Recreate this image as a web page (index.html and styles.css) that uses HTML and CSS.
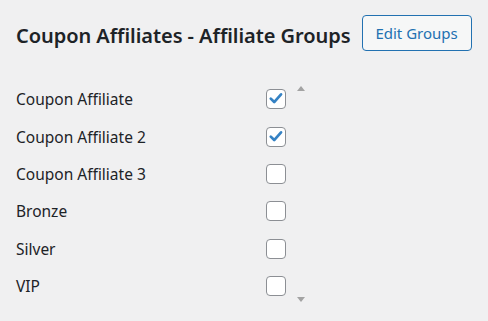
FILE: index.html
```html
<!DOCTYPE html>
<html lang="en">
<head>
  <meta charset="UTF-8">
  <title>Coupon Affiliates - Affiliate Groups</title>
  <link rel="stylesheet" href="styles.css">
</head>
<body>
  <div class="header">
    <h1>Coupon Affiliates - Affiliate Groups</h1>
    <a class="button" href="#">Edit Groups</a>
  </div>

  <div class="groups">
    <div class="list">
      <label class="row"><span class="name">Coupon Affiliate</span><input type="checkbox" checked></label>
      <label class="row"><span class="name">Coupon Affiliate 2</span><input type="checkbox" checked></label>
      <label class="row"><span class="name">Coupon Affiliate 3</span><input type="checkbox"></label>
      <label class="row"><span class="name">Bronze</span><input type="checkbox"></label>
      <label class="row"><span class="name">Silver</span><input type="checkbox"></label>
      <label class="row"><span class="name">VIP</span><input type="checkbox"></label>
    </div>
    <div class="scrollbar">
      <span class="arrow up"></span>
      <span class="arrow down"></span>
    </div>
  </div>
</body>
</html>
```

FILE: styles.css
```css
body {
  margin: 0;
  background: #f0f0f1;
  color: #1d2327;
  font-family: "Noto Sans", "Open Sans", sans-serif;
}

.header {
  display: flex;
  align-items: center;
  padding: 15px 0 0 16px;
  height: 36px;
}

h1 {
  margin: 5px 0 0 0;
  font-size: 20px;
  font-weight: 600;
  letter-spacing: -0.05px;
}

.button {
  margin-left: 11px;
  height: 34px;
  width: 108px;
  display: flex;
  align-items: center;
  justify-content: center;
  border: 1px solid #2271b1;
  border-radius: 4px;
  background: #f6f7f7;
  color: #2271b1;
  font-size: 15px;
  text-decoration: none;
}

.groups {
  display: flex;
  margin-top: 29.5px;
  padding-left: 16px;
  height: 225px;
}

.list {
  width: 276px;
}

.row {
  display: flex;
  align-items: center;
  height: 37.4px;
  font-size: 15.5px;
}

.name {
  width: 250px;
}

input[type="checkbox"] {
  appearance: none;
  margin: 0;
  width: 20px;
  height: 20px;
  border: 1px solid #8c8f94;
  border-radius: 4px;
  background: #fff;
}

input[type="checkbox"]:checked {
  background: #fff url("data:image/svg+xml,%3Csvg xmlns='http://www.w3.org/2000/svg' viewBox='0 0 20 20'%3E%3Cpath d='M4.2 9.6 L8 13.4 L15.6 4.8' fill='none' stroke='%233582c4' stroke-width='3' stroke-linecap='round' stroke-linejoin='round'/%3E%3C/svg%3E") center / 18px 18px no-repeat;
}

.scrollbar {
  width: 17px;
  display: flex;
  flex-direction: column;
  justify-content: space-between;
  align-items: center;
  padding: 5px 0 4px;
}

.arrow {
  width: 0;
  height: 0;
  border-left: 4.5px solid transparent;
  border-right: 4.5px solid transparent;
}

.arrow.up {
  border-bottom: 5px solid #a3a3a3;
}

.arrow.down {
  border-top: 5px solid #a3a3a3;
}
```
